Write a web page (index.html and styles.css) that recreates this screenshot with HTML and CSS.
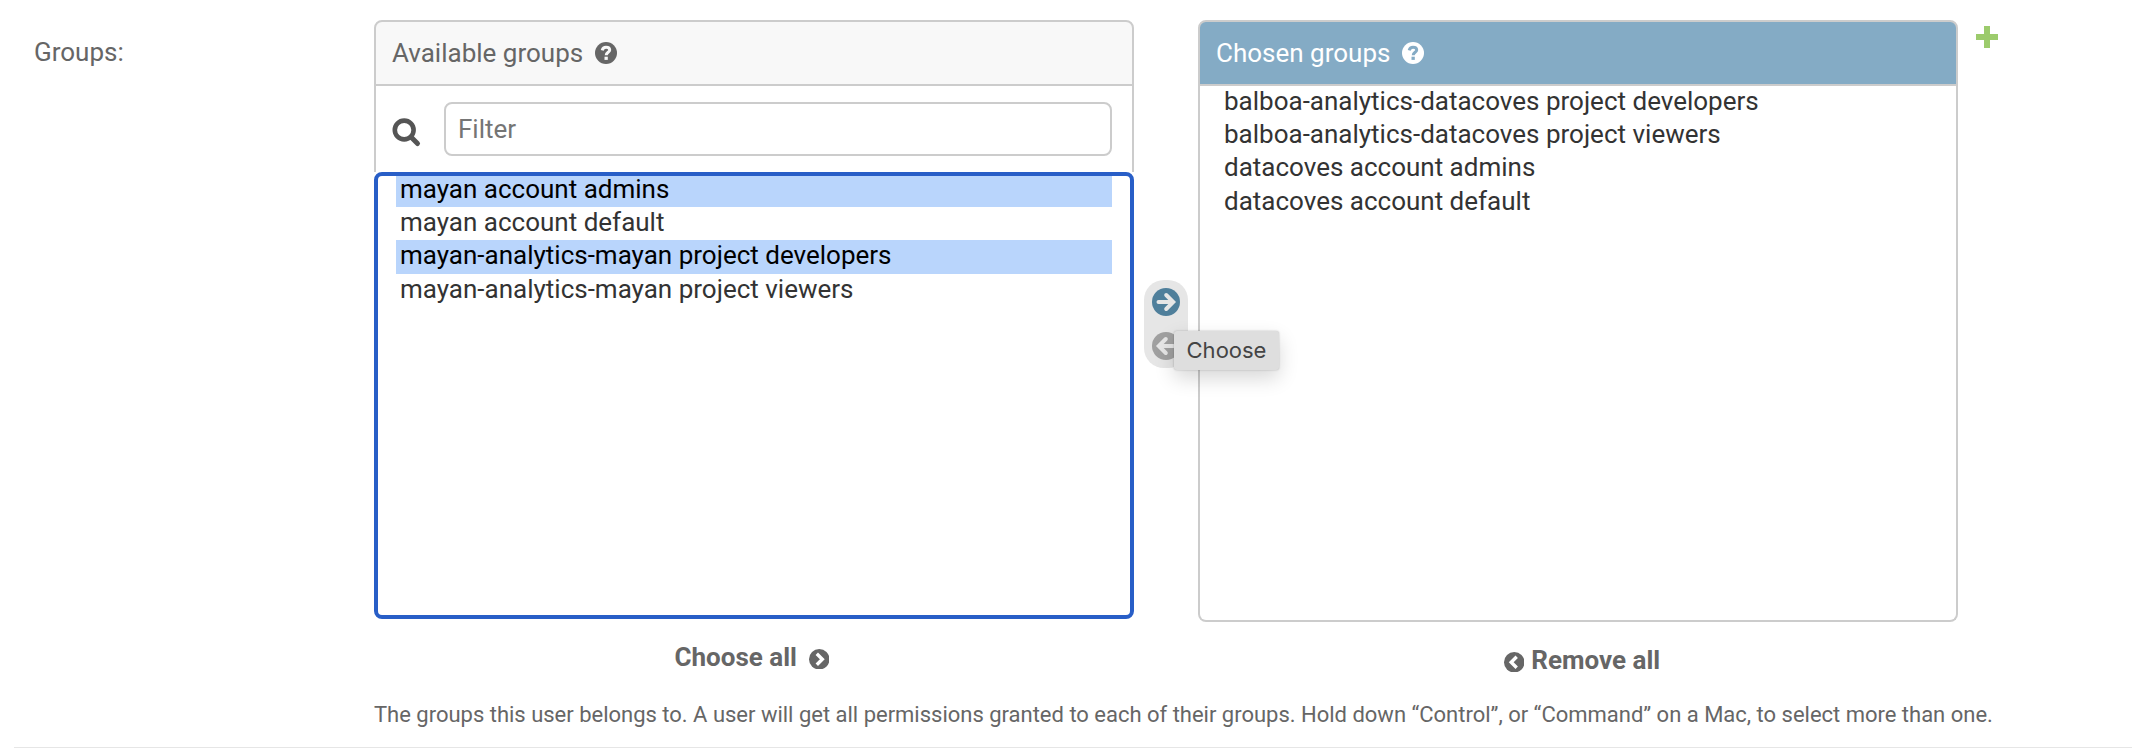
FILE: index.html
```html
<!DOCTYPE html>
<html lang="en">
<head>
<meta charset="utf-8">
<title>Groups</title>
<link rel="stylesheet" href="styles.css">
</head>
<body>
<div class="form-row">
  <div class="label">Groups:</div>
  <div class="field">
    <div class="selector">
      <section class="column available">
        <h2 class="title">Available groups
          <svg class="help" viewBox="0 0 22 22"><circle cx="11" cy="11" r="11" fill="#666"/><path d="M7.200 8.300C7.800 6.100 9.200 5.200 11 5.200C13.200 5.200 14.700 6.300 14.700 8.100C14.700 10.300 11.200 10.400 11.200 13.200" fill="none" stroke="#f8f8f8" stroke-width="3"/><rect x="9.500" y="14.700" width="3.300" height="3.200" fill="#f8f8f8"/></svg>
        </h2>
        <div class="filter">
          <svg class="search" viewBox="0 0 30 30"><circle cx="12.200" cy="12" r="9.400" fill="none" stroke="#555" stroke-width="4.600"/><path d="M19 19L25.500 25.500" stroke="#555" stroke-width="5" stroke-linecap="round"/></svg>
          <input class="filter-input" type="text" placeholder="Filter">
        </div>
        <ul class="options focused">
          <li class="selected">mayan account admins</li>
          <li>mayan account default</li>
          <li class="selected tall">mayan-analytics-mayan project developers</li>
          <li>mayan-analytics-mayan project viewers</li>
        </ul>
        <a class="all choose-all">Choose all
          <svg class="chevron" viewBox="0 0 20 20"><circle cx="10" cy="10" r="10" fill="#666"/><path d="M7.600 4.600L13 10L7.600 15.400" fill="none" stroke="#fff" stroke-width="3.300"/></svg>
        </a>
      </section>
      <div class="chooser">
        <svg class="arrow" viewBox="0 0 28 28"><circle cx="14" cy="14" r="14" fill="#4f7f9b"/><path d="M6.500 14H20M14.200 7L21.200 14L14.200 21" fill="none" stroke="#e6e6e6" stroke-width="4" stroke-linecap="round" stroke-linejoin="miter"/></svg>
        <svg class="arrow" viewBox="0 0 28 28"><circle cx="14" cy="14" r="14" fill="#a0a0a0"/><path d="M21.500 14H8M13.800 7L6.800 14L13.800 21" fill="none" stroke="#e6e6e6" stroke-width="4" stroke-linecap="round" stroke-linejoin="miter"/></svg>
        <div class="tooltip">Choose</div>
      </div>
      <section class="column chosen">
        <h2 class="title">Chosen groups
          <svg class="help" viewBox="0 0 22 22"><circle cx="11" cy="11" r="11" fill="#fff"/><path d="M7.200 8.300C7.800 6.100 9.200 5.200 11 5.200C13.200 5.200 14.700 6.300 14.700 8.100C14.700 10.300 11.200 10.400 11.200 13.200" fill="none" stroke="#84abc5" stroke-width="3"/><rect x="9.500" y="14.700" width="3.300" height="3.200" fill="#84abc5"/></svg>
        </h2>
        <ul class="options">
          <li>balboa-analytics-datacoves project developers</li>
          <li>balboa-analytics-datacoves project viewers</li>
          <li class="tall">datacoves account admins</li>
          <li>datacoves account default</li>
        </ul>
        <a class="all remove-all">
          <svg class="chevron" viewBox="0 0 20 20"><circle cx="10" cy="10" r="10" fill="#666"/><path d="M12.400 4.600L7 10L12.400 15.400" fill="none" stroke="#fff" stroke-width="3.300"/></svg>
          Remove all</a>
      </section>
      <svg class="add" viewBox="0 0 22 22"><path d="M3 11H19M11 3V19" stroke="#9ccb6c" stroke-width="6" stroke-linecap="square"/></svg>
    </div>
    <p class="hint">The groups this user belongs to. A user will get all permissions granted to each of their groups. Hold down “Control”, or “Command” on a Mac, to select more than one.</p>
  </div>
</div>
</body>
</html>
```
FILE: styles.css
```css
* { box-sizing: border-box; }
body {
  margin: 0;
  background: #fff;
  color: #666;
  font-family: Roboto, "Liberation Sans", sans-serif;
  font-size: 26px;
  overflow: hidden;
}
.form-row {
  display: flex;
  height: 748px;
  margin-left: 14px;
  padding: 20px 0 0 20px;
  border-bottom: 1px solid #e6e6e6;
}
.label { width: 340px; padding-top: 16px; line-height: 32px; }
.selector { display: flex; align-items: flex-start; }
.column { width: 760px; display: flex; flex-direction: column; }
.title {
  display: flex;
  align-items: center;
  gap: 12px;
  height: 66px;
  margin: 0;
  padding: 0 16px;
  border: 2px solid #ccc;
  border-radius: 8px 8px 0 0;
  background: #f8f8f8;
  font-size: 26px;
  font-weight: 400;
}
.help { width: 22px; height: 22px; }
.chosen .title { background: #84abc5; color: #fff; }
.filter {
  display: flex;
  align-items: flex-start;
  height: 86px;
  padding: 16px 20px 0 16px;
  border: solid #ccc;
  border-width: 0 2px;
}
.search { width: 30px; height: 30px; margin: 16px 22px 0 0; }
.filter-input {
  flex: 1;
  min-width: 0;
  height: 54px;
  padding: 0 12px 1px;
  border: 2px solid #ccc;
  border-radius: 8px;
  background: #fff;
  font: 26px Roboto, sans-serif;
}
.filter-input::placeholder { color: #757575; }
.options {
  margin: 0;
  padding: 0 20px 0 20px;
  border: 2px solid #ccc;
  border-top: 0;
  border-radius: 0 0 8px 8px;
  height: 536px;
  list-style: none;
  color: #333;
  overflow: hidden;
}
.options li { height: 33px; padding-left: 4px; line-height: 31px; white-space: nowrap; }
.options .tall { height: 34px; }
.options.focused {
  height: 447px;
  padding: 0 18px;
  border: 4px solid #285ec7;
  border-radius: 8px;
}
.focused li:first-child { height: 31px; line-height: 27px; }
.options .selected { background: #b9d5fc; color: #000; }
.all {
  display: flex;
  align-items: center;
  justify-content: center;
  height: 32px;
  font-weight: 700;
}
.choose-all { gap: 12px; margin-top: 22px; padding-right: 4px; }
.remove-all { gap: 7px; margin-top: 22px; padding-left: 8px; }
.chevron { width: 20.500px; height: 20.500px; margin-top: 4px; }
.chooser {
  position: relative;
  display: flex;
  flex-direction: column;
  gap: 16px;
  width: 44px;
  height: 88px;
  margin: 260px 10px 0;
  padding: 8px;
  border-radius: 20px;
  background: #e6e6e6;
}
.arrow { width: 28px; height: 28px; }
.tooltip {
  position: absolute;
  left: 30px;
  top: 51px;
  width: 105px;
  height: 39px;
  border-radius: 3px;
  background: #dedede;
  box-shadow: 0 0 2px rgba(0,0,0,.25), 0 8px 20px rgba(0,0,0,.16);
  color: #444;
  font: 22px/38px Inter, sans-serif;
  text-align: center;
}
.add { width: 22px; height: 22px; margin: 6px 0 0 18px; }
.hint { margin: 26px 0 0; font-size: 22px; line-height: 26px; letter-spacing: -.008px; white-space: nowrap; }
```
